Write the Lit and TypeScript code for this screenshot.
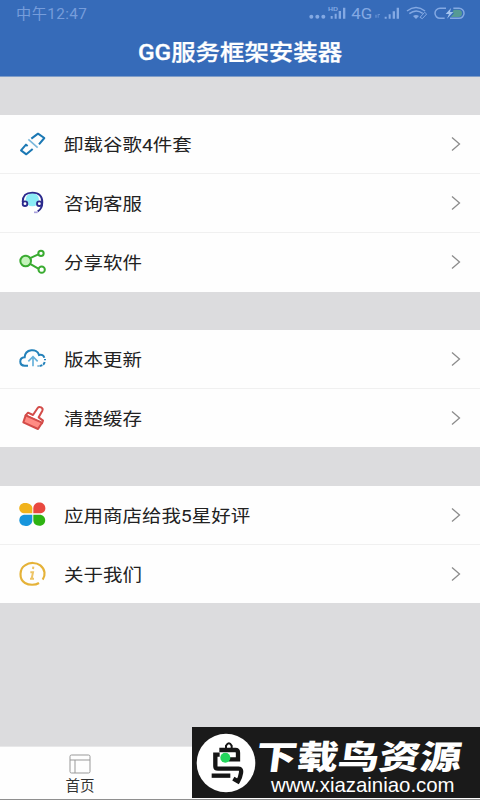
import { LitElement, css, html, svg, SVGTemplateResult } from 'lit'
import { customElement, property } from 'lit/decorators.js'

type MenuItem = {
  icon: string;
  label: string;
}

const groups: MenuItem[][] = [
  [
    { icon: 'unlink', label: '卸载谷歌4件套' },
    { icon: 'service', label: '咨询客服' },
    { icon: 'share', label: '分享软件' },
  ],
  [
    { icon: 'update', label: '版本更新' },
    { icon: 'brush', label: '清楚缓存' },
  ],
  [
    { icon: 'rating', label: '应用商店给我5星好评' },
    { icon: 'about', label: '关于我们' },
  ],
]

const icons: Record<string, SVGTemplateResult> = {
  unlink: svg`
    <g fill="none" stroke-width="6" stroke-linejoin="round">
      <path stroke="#1b78b4" d="M43 32L63 17L82 30L66 49M32 54L27 50L12 67L28 79L47 63"/>
      <path stroke="#7ab8dc" stroke-width="5" d="M34 34L62 59"/>
    </g>`,
  service: svg`
    <circle cx="46" cy="38" r="20" fill="#8cecf6"/>
    <g fill="none" stroke="#2b2a8c" stroke-width="5.5">
      <path d="M17 45C17 24 29 17 46 17S76 25 76 46C76 60 72 68 62 73"/>
      <circle cx="24" cy="50" r="7" fill="#fff"/>
      <circle cx="67" cy="50" r="7" fill="#fff"/>
    </g>
    <path d="M51 76h11" stroke="#a9a0dc" stroke-width="5"/>`,
  share: svg`
    <g stroke="#39ab30" stroke-width="6" fill="#fff">
      <path d="M38 37L64 25M38 53L64 68"/>
      <circle cx="26" cy="45" r="16" fill="#c4f3bb"/>
      <circle cx="72" cy="22" r="8"/>
      <circle cx="74" cy="71" r="9.5"/>
    </g>`,
  update: svg`
    <g fill="none" stroke="#2381ba" stroke-width="6">
      <path d="M33 68H23C6 68 5 44 23 43C24 18 60 14 66 36C74 33 80 37 82 44"/>
      <path d="M84 48v4M83 57C81 66 75 69 62 69" stroke-dasharray="9 3"/>
      <path stroke="#65b0da" stroke-width="5" d="M48 70V42M34 55L48 41L62 55"/>
    </g>`,
  brush: svg`
    <g stroke="#d34c49" stroke-width="6" stroke-linejoin="round">
      <path fill="#fff" d="M26 40L33 32L48 39L62 18C67 11 80 18 76 26L65 46L78 56L75 64Z"/>
      <path fill="#ff8b83" d="M26 40L75 62L63 81L19 61Z"/>
    </g>`,
  rating: svg`
    <path fill="#f1b31c" d="M46 43H24C1 43 1 12 24 12C39 12 46 20 46 28Z"/>
    <path fill="#e9483f" d="M49 43V28C49 5 85 5 85 28C85 38 78 43 68 43Z"/>
    <path fill="#1795dc" d="M46 47V63C46 87 7 87 7 64C7 52 15 47 25 47Z"/>
    <path fill="#2eb312" d="M49 47H67C90 47 91 80 67 80C56 80 49 74 49 64Z"/>`,
  about: svg`
    <path fill="none" stroke="#e5b238" stroke-width="6.5" d="M66 75C55 82 36 82 24 75C5 64 7 32 24 22C38 12 58 13 70 22C85 34 86 52 77 65"/>
    <path fill="none" stroke="#edc364" stroke-width="6" d="M49 26L48 33M40 43H48L44 62M39 62H51"/>`,
}

@customElement('status-bar')
export class StatusBar extends LitElement {
  render() {
    return html`
    <span class="time">中午12:47</span>
    <svg class="signals" viewBox="0 0 540 90">
      <g fill="#84a9e3">
        <circle cx="34" cy="50" r="6"/>
        <circle cx="52" cy="50" r="6"/>
        <circle cx="70" cy="50" r="6"/>
        <text class="hd" x="84" y="32" textLength="30" lengthAdjust="spacingAndGlyphs">HD</text>
        <path d="M92 48h6v8h-6zM104 41h6v15h-6zM116 33h7v23h-7zM129 23h7v33h-7z"/>
        <text class="net" x="154" y="56" textLength="63" lengthAdjust="spacingAndGlyphs">4G</text>
        <path opacity=".6" d="M226 44h4v9h-4zM233 42h7v3h-4v8h-3z"/>
        <path d="M254 50h6v6h-6zM266 43h6v13h-6zM278 34h7v22h-7zM290 23h7v33h-7z"/>
        <path d="M339 48L348 57L357 48Q348 42 339 48z"/>
      </g>
      <g fill="none" stroke="#84a9e3" stroke-width="4.5">
        <path d="M321 33Q348 12 375 33M328 41Q348 25 368 40"/>
        <path stroke-width="3" d="M360 52L374 37L380 42L367 56z"/>
        <path d="M438 25H420A15 15 0 0 0 420 55H434M460 25H477A15 15 0 0 1 477 55H450"/>
      </g>
      <path fill="#569a94" d="M461 29H475A11 11 0 0 1 475 51H452L463 38H457z"/>
      <path fill="#a4c4ef" d="M453 24L437 42H447L441 56L460 36H450z"/>
    </svg>
    `
  }

  static styles = css`
:host {
  display: flex;
  justify-content: space-between;
  height: 30px;
  padding-left: 16px;
}
.time {
  font-size: 14.5px;
  line-height: 30px;
  letter-spacing: 0.4px;
  color: #769ddb;
  transform: scaleX(1.05);
  transform-origin: 0 50%;
}
.signals {
  width: 180px;
  height: 30px;
}
.hd {
  font: bold 17px 'Liberation Sans', sans-serif;
}
.net {
  font: 42px Roboto, sans-serif;
}
`
}

@customElement('menu-row')
export class MenuRow extends LitElement {
  @property()
  public icon = '';

  @property()
  public label = '';

  render() {
    return html`
    <svg class="icon" viewBox="0 0 96 96">${icons[this.icon]}</svg>
    <span class="label">${this.label}</span>
    <svg class="arrow" viewBox="0 0 10 16"><path d="M1 1.5L8.5 8L1 14.5"/></svg>
    `
  }

  static styles = css`
:host {
  display: flex;
  align-items: center;
  flex: 1;
  padding: 0 19px 0 17px;
}
.icon {
  width: 32px;
  height: 32px;
}
.label {
  flex: 1;
  margin-left: 14.7px;
  padding-bottom: 1px;
  font-size: 17.4px;
  color: #222;
  transform: scaleX(1.12);
  transform-origin: 0 50%;
}
.arrow {
  width: 10px;
  height: 16px;
  fill: none;
  stroke: #8c8c8c;
  stroke-width: 1.3;
}
`
}

@customElement('site-banner')
export class SiteBanner extends LitElement {
  render() {
    return html`
    <svg class="logo" viewBox="0 0 180 180">
      <circle cx="90" cy="90" r="88" fill="#fff"/>
      <g fill="none" stroke="#151515" stroke-width="13">
        <path stroke-width="6" d="M90 47V38Q99 24 107 38V47"/>
        <path d="M70 51H118Q126 51 126 59V79H98"/>
        <path d="M71 65H58V100Q58 107 66 107H128Q137 107 135 120Q133 134 126 145L112 137"/>
        <path d="M47 128H103"/>
      </g>
      <circle cx="88" cy="74" r="15" fill="#24d65c"/>
    </svg>
    <div class="text">
      <div class="name">下载鸟资源</div>
      <div class="url">www.xiazainiao.com</div>
    </div>
    `
  }

  static styles = css`
:host {
  display: flex;
  width: 288px;
  height: 71px;
  background: #1a1a1a;
  color: #fff;
}
.logo {
  width: 60px;
  height: 60px;
  margin: 6px 0 0 4px;
}
.text {
  white-space: nowrap;
}
.name {
  height: 47px;
  margin-left: 1px;
  font-size: 33px;
  font-weight: 900;
  line-height: 62px;
  transform: scaleX(1.245) skewX(-6deg);
  transform-origin: 0 50%;
}
.url {
  margin-left: 15px;
  font: 20.4px/22px 'Liberation Sans', sans-serif;
}
`
}

@customElement('app-root')
export class AppRoot extends LitElement {
  render() {
    return html`
    <header class="header">
      <status-bar></status-bar>
      <h1 class="title">GG服务框架安装器</h1>
    </header>
    <main class="main">
      ${groups.map(group => html`
        <section class="group">
          ${group.map((item, i) => html`
            ${i > 0 ? html`<div class="divider"></div>` : ''}
            <menu-row .icon=${item.icon} .label=${item.label}></menu-row>
          `)}
        </section>
      `)}
    </main>
    <footer class="footer">
      <div class="tab">
        <svg class="home" viewBox="0 0 22 20"><path d="M2.5 1H19.5Q21 1 21 2.5V17.5Q21 19 19.5 19H2.5Q1 19 1 17.5V2.5Q1 1 2.5 1zM1 6H21M6 6V19"/></svg>
        <span>首页</span>
      </div>
      <site-banner class="banner"></site-banner>
    </footer>
    `
  }

  static styles = css`
:host {
  display: flex;
  flex-direction: column;
  height: 800px;
  background: #dcdcde;
  font-family: Roboto, 'Noto Sans CJK SC', sans-serif;
  overflow: hidden;
}
.header {
  height: 76px;
  background: #366bb9;
  border-bottom: 1px solid #7f9dc8;
}
.title {
  margin: 0;
  font-size: 21.8px;
  font-weight: 500;
  line-height: 45px;
  text-align: center;
  color: #fff;
  -webkit-text-stroke: 0.3px #fff;
  transform: scaleX(1.12);
}
.main {
  display: flex;
  flex-direction: column;
  flex: 1;
  gap: 38.5px;
  padding-top: 38px;
}
.group {
  display: flex;
  flex-direction: column;
  height: 117px;
  background: #fefefe;
}
.group:first-child {
  height: 176.5px;
}
.divider {
  height: 1px;
  background: #f0f0f0;
}
.footer {
  position: relative;
  height: 52px;
  background: #fefefe;
  border-top: 1px solid #e8e8e9;
  border-bottom: 1px solid #8f8f8f;
}
.tab {
  display: flex;
  flex-direction: column;
  align-items: center;
  width: 160px;
  padding-top: 7px;
  font-size: 14.5px;
  line-height: 25px;
  color: #333;
}
.home {
  width: 22px;
  height: 20px;
  fill: none;
  stroke: #999;
  stroke-width: 1;
}
.banner {
  position: absolute;
  right: 0;
  bottom: 1px;
}
`
}

declare global {
  interface HTMLElementTagNameMap {
    'app-root': AppRoot
    'menu-row': MenuRow
    'site-banner': SiteBanner
    'status-bar': StatusBar
  }
}
